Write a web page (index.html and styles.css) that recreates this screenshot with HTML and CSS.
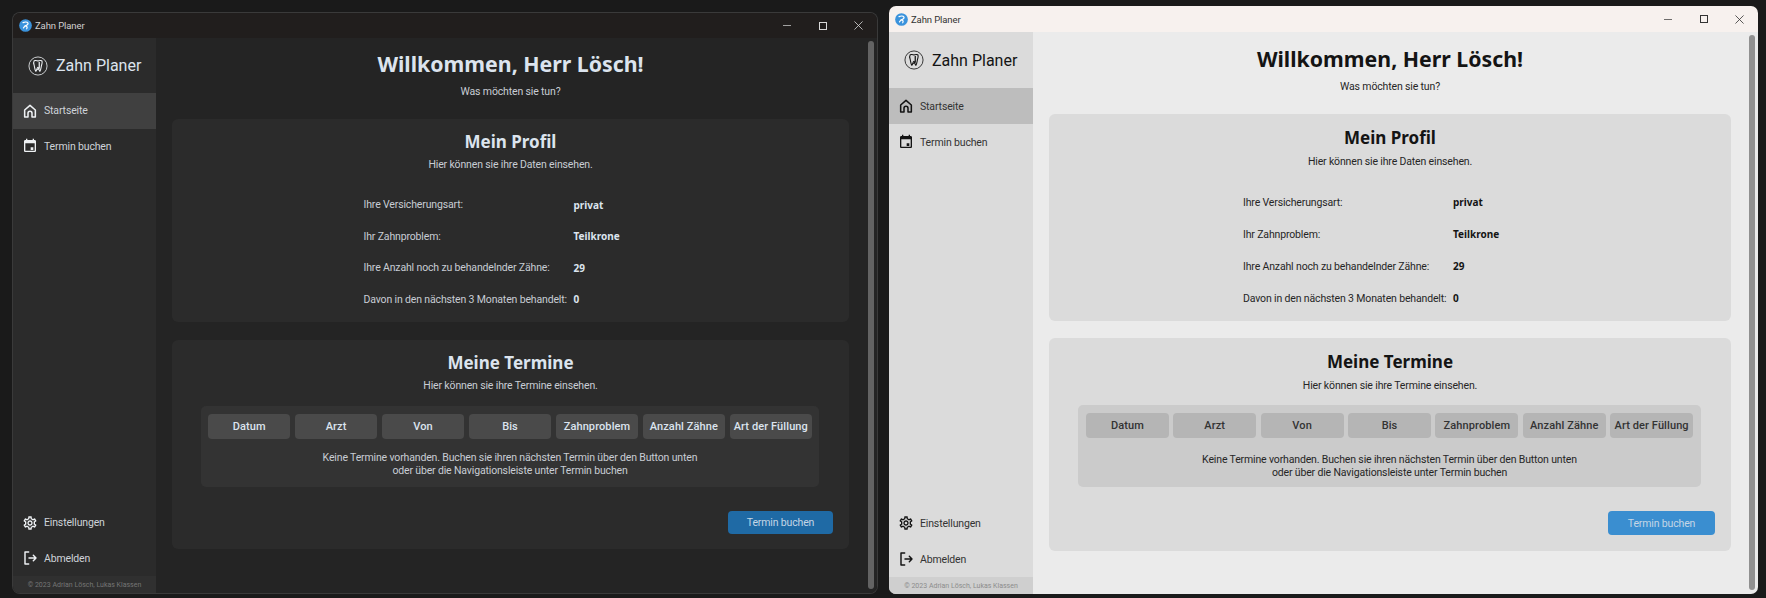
FILE: index.html
```html
<!DOCTYPE html>
<html lang="de">
<head>
<meta charset="utf-8">
<title>Zahn Planer</title>
<link rel="stylesheet" href="styles.css">
</head>
<body>
<svg class="defs" aria-hidden="true">
  <symbol id="i-home" viewBox="0 0 24 24"><path d="M4 10.5 12 3.5l8 7V21h-5v-5.500a3 3 0 0 0-6 0V21H4Z" fill="none" stroke="currentColor" stroke-width="2.300" stroke-linejoin="round"/></symbol>
  <symbol id="i-event" viewBox="0 0 24 24"><path fill="currentColor" d="M17 14h-4v4h4v-4zM16 1v2H8V1H6v2H5c-1.110 0-2 .9-2 2v14c0 1.100.89 2 2 2h14c1.100 0 2-.9 2-2V5c0-1.100-.9-2-2-2h-1V1h-2zm3 18H5V8h14v11z"/></symbol>
  <symbol id="i-gear" viewBox="0 0 24 24"><path fill="currentColor" d="M19.430 12.980c.04-.32.07-.64.07-.98 0-.34-.03-.66-.07-.98l2.110-1.650c.19-.15.24-.42.12-.64l-2-3.460c-.09-.16-.26-.25-.44-.25-.06 0-.12.01-.17.03l-2.490 1c-.52-.4-1.080-.73-1.690-.98l-.38-2.650C14.460 2.180 14.250 2 14 2h-4c-.25 0-.46.18-.49.42l-.38 2.650c-.61.25-1.170.59-1.690.98l-2.490-1c-.06-.02-.12-.03-.18-.03-.17 0-.34.09-.43.25l-2 3.460c-.13.22-.07.49.12.64l2.110 1.650c-.04.32-.07.65-.07.98 0 .33.03.66.07.98l-2.110 1.650c-.19.15-.24.42-.12.64l2 3.460c.09.16.26.25.44.25.06 0 .12-.01.17-.03l2.490-1c.52.4 1.080.73 1.690.98l.38 2.650c.03.24.24.42.49.42h4c.25 0 .46-.18.49-.42l.38-2.650c.61-.25 1.170-.59 1.690-.98l2.490 1c.06.02.12.03.18.03.17 0 .34-.09.43-.25l2-3.460c.12-.22.07-.49-.12-.64l-2.110-1.650zm-1.980-1.710c.04.31.05.52.05.73 0 .21-.02.43-.05.73l-.14 1.130.89.7 1.080.84-.7 1.210-1.270-.51-1.040-.42-.9.68c-.43.32-.84.56-1.250.73l-1.060.43-.16 1.130-.2 1.350h-1.400l-.19-1.350-.16-1.130-1.060-.43c-.43-.18-.83-.41-1.230-.71l-.91-.7-1.060.43-1.270.51-.7-1.210 1.080-.84.89-.7-.14-1.130c-.03-.31-.05-.54-.05-.74s.02-.43.05-.73l.14-1.130-.89-.7-1.080-.84.7-1.210 1.270.51 1.040.42.9-.68c.43-.32.84-.56 1.250-.73l1.060-.43.16-1.130.2-1.350h1.390l.19 1.350.16 1.130 1.060.43c.43.18.83.41 1.230.71l.91.7 1.060-.43 1.270-.51.7 1.210-1.070.85-.89.7.14 1.130zM12 8c-2.210 0-4 1.790-4 4s1.790 4 4 4 4-1.790 4-4-1.790-4-4-4zm0 6c-1.100 0-2-.9-2-2s.9-2 2-2 2 .9 2 2-.9 2-2 2z"/></symbol>
  <symbol id="i-logout" viewBox="0 0 24 24"><path d="M10 3H4.500v18H10M10.500 12H21M17 8l4 4-4 4" fill="none" stroke="currentColor" stroke-width="2.200" stroke-linecap="round" stroke-linejoin="round"/></symbol>
  <symbol id="i-tooth" viewBox="0 0 32 32"><circle cx="16" cy="16" r="14.500" fill="none" stroke="currentColor" stroke-width="1.300"/><path d="M10 7.500c2-1 4 0 6 .5 2-.5 4-1.500 6-.5 1.500 2 .5 5-.5 8-.7 3-1 7-2.500 9-1.500-.5-1.500-6-3-6.500-2 .5-2 6-3.500 6.500-1.500-2-1.800-6-2.500-9-1-3-1.500-6 0-8Z" fill="none" stroke="currentColor" stroke-width="1.700" stroke-linejoin="round"/><path d="M18 9.500v9.500l-3 3" fill="none" stroke="currentColor" stroke-width="2"/></symbol>
  <symbol id="i-app" viewBox="0 0 16 16"><circle cx="8" cy="8" r="7.800" fill="#3b93dc"/><path d="M5 4.500c2-1 5-1 6 .5s-2 3-3 3.500c2 .5 2.500 2 1.500 3.500M7.500 8.500 5.500 11" fill="none" stroke="#fff" stroke-width="1.500" stroke-linecap="round"/></symbol>
  <symbol id="i-close" viewBox="0 0 10 10"><path d="M.5.5l9 9M9.500.5l-9 9" fill="none" stroke="currentColor" stroke-width=".9"/></symbol>
</svg>

<section class="window dark">
  <header class="titlebar">
    <svg class="app-icon"><use href="#i-app"/></svg>
    <span class="app-title">Zahn Planer</span>
    <div class="controls">
      <span class="ctl"><i class="ctl-min"></i></span>
      <span class="ctl"><i class="ctl-max"></i></span>
      <span class="ctl"><svg class="ctl-close"><use href="#i-close"/></svg></span>
    </div>
  </header>
  <div class="app">
    <aside class="sidebar">
      <div class="brand"><svg class="brand-icon"><use href="#i-tooth"/></svg><span>Zahn Planer</span></div>
      <nav class="nav">
        <a class="nav-item active"><svg class="nav-icon"><use href="#i-home"/></svg>Startseite</a>
        <a class="nav-item"><svg class="nav-icon"><use href="#i-event"/></svg>Termin buchen</a>
      </nav>
      <nav class="nav nav-bottom">
        <a class="nav-item"><svg class="nav-icon"><use href="#i-gear"/></svg>Einstellungen</a>
        <a class="nav-item"><svg class="nav-icon"><use href="#i-logout"/></svg>Abmelden</a>
      </nav>
      <footer class="copyright">© 2023 Adrian Lösch, Lukas Klassen</footer>
    </aside>
    <main class="main">
      <h1 class="title">Willkommen, Herr Lösch!</h1>
      <p class="subtitle">Was möchten sie tun?</p>
      <section class="card card-profile">
        <h2 class="card-title">Mein Profil</h2>
        <p class="card-sub">Hier können sie ihre Daten einsehen.</p>
        <dl class="facts">
          <dt>Ihre Versicherungsart:</dt><dd>privat</dd>
          <dt>Ihr Zahnproblem:</dt><dd>Teilkrone</dd>
          <dt>Ihre Anzahl noch zu behandelnder Zähne:</dt><dd>29</dd>
          <dt>Davon in den nächsten 3 Monaten behandelt:</dt><dd>0</dd>
        </dl>
      </section>
      <section class="card card-dates">
        <h2 class="card-title">Meine Termine</h2>
        <p class="card-sub">Hier können sie ihre Termine einsehen.</p>
        <div class="table">
          <div class="table-head">
            <span>Datum</span><span>Arzt</span><span>Von</span><span>Bis</span><span>Zahnproblem</span><span>Anzahl Zähne</span><span>Art der Füllung</span>
          </div>
          <p class="table-empty">Keine Termine vorhanden. Buchen sie ihren nächsten Termin über den Button unten<br>oder über die Navigationsleiste unter Termin buchen</p>
        </div>
        <div class="actions"><button class="btn">Termin buchen</button></div>
      </section>
      <div class="scrollbar"></div>
    </main>
  </div>
</section>

<section class="window light">
  <header class="titlebar">
    <svg class="app-icon"><use href="#i-app"/></svg>
    <span class="app-title">Zahn Planer</span>
    <div class="controls">
      <span class="ctl"><i class="ctl-min"></i></span>
      <span class="ctl"><i class="ctl-max"></i></span>
      <span class="ctl"><svg class="ctl-close"><use href="#i-close"/></svg></span>
    </div>
  </header>
  <div class="app">
    <aside class="sidebar">
      <div class="brand"><svg class="brand-icon"><use href="#i-tooth"/></svg><span>Zahn Planer</span></div>
      <nav class="nav">
        <a class="nav-item active"><svg class="nav-icon"><use href="#i-home"/></svg>Startseite</a>
        <a class="nav-item"><svg class="nav-icon"><use href="#i-event"/></svg>Termin buchen</a>
      </nav>
      <nav class="nav nav-bottom">
        <a class="nav-item"><svg class="nav-icon"><use href="#i-gear"/></svg>Einstellungen</a>
        <a class="nav-item"><svg class="nav-icon"><use href="#i-logout"/></svg>Abmelden</a>
      </nav>
      <footer class="copyright">© 2023 Adrian Lösch, Lukas Klassen</footer>
    </aside>
    <main class="main">
      <h1 class="title">Willkommen, Herr Lösch!</h1>
      <p class="subtitle">Was möchten sie tun?</p>
      <section class="card card-profile">
        <h2 class="card-title">Mein Profil</h2>
        <p class="card-sub">Hier können sie ihre Daten einsehen.</p>
        <dl class="facts">
          <dt>Ihre Versicherungsart:</dt><dd>privat</dd>
          <dt>Ihr Zahnproblem:</dt><dd>Teilkrone</dd>
          <dt>Ihre Anzahl noch zu behandelnder Zähne:</dt><dd>29</dd>
          <dt>Davon in den nächsten 3 Monaten behandelt:</dt><dd>0</dd>
        </dl>
      </section>
      <section class="card card-dates">
        <h2 class="card-title">Meine Termine</h2>
        <p class="card-sub">Hier können sie ihre Termine einsehen.</p>
        <div class="table">
          <div class="table-head">
            <span>Datum</span><span>Arzt</span><span>Von</span><span>Bis</span><span>Zahnproblem</span><span>Anzahl Zähne</span><span>Art der Füllung</span>
          </div>
          <p class="table-empty">Keine Termine vorhanden. Buchen sie ihren nächsten Termin über den Button unten<br>oder über die Navigationsleiste unter Termin buchen</p>
        </div>
        <div class="actions"><button class="btn">Termin buchen</button></div>
      </section>
      <div class="scrollbar"></div>
    </main>
  </div>
</section>
</body>
</html>
```
FILE: styles.css
```css
* { box-sizing: border-box; }
html, body { margin: 0; height: 100%; }
body {
  background: #1a1a1a;
  font-family: Roboto, "Liberation Sans", sans-serif;
  font-size: 11px;
  overflow: hidden;
  position: relative;
}
.defs { position: absolute; width: 0; height: 0; }

/* Windows on a desktop */
.window {
  position: absolute;
  display: flex;
  flex-direction: column;
  border-radius: 7px;
  overflow: hidden;
}
.dark {
  left: 13px; top: 13px; width: 864px; height: 580px;
  --bar: #211e1d; --side: #2b2b2b; --main: #242424; --card: #2b2b2b; --inner: #333333;
  --head: #4a4a4a; --active: #404040; --foot: #303030; --text: #dce4ee; --muted: #c8cdd4;
  --head-text: #dce4ee; --nav: #ced3d9; --copy: #757575; --icon: #eef1f4; --btn: #1f6aa5;
  --scroll: #636363; --ctl: #d8d8d8; --bar-text: #d0d0d0;
  box-shadow: 0 0 0 1px #3a3a3a;
}
.light {
  left: 889px; top: 6px; width: 869px; height: 588px;
  --bar: #f7f1ee; --side: #dbdbdb; --main: #ebebeb; --card: #dbdbdb; --inner: #cbcbcb;
  --head: #b5b5b5; --active: #bdbdbd; --foot: #cfcfcf; --text: #141414; --muted: #262626;
  --head-text: #333333; --nav: #333333; --copy: #8c8c8c; --icon: #141414; --btn: #3a8ed0;
  --scroll: #909090; --ctl: #333333; --bar-text: #333333;
}

/* Title bar */
.titlebar {
  flex: none;
  display: flex;
  align-items: center;
  height: 25px;
  padding: 0 1px 0 6px;
  background: var(--bar);
  color: var(--bar-text);
}
.light .titlebar { height: 26px; }
.app-icon { width: 13px; height: 13px; margin-right: 3px; }
.app-title { font-size: 9.500px; letter-spacing: -.1px; }
.controls { margin-left: auto; display: flex; }
.ctl {
  width: 35.500px;
  height: 24px;
  display: flex;
  align-items: center;
  justify-content: center;
  color: var(--ctl);
}
.ctl-min { width: 8px; border-top: 1px solid var(--ctl); opacity: .7; }
.ctl-max { width: 8px; height: 8px; border: 1px solid var(--ctl); }
.ctl-close { width: 9px; height: 9px; }

/* Layout */
.app { flex: 1; min-height: 0; display: flex; }
.sidebar {
  flex: none;
  width: 143px;
  display: flex;
  flex-direction: column;
  background: var(--side);
}
.light .sidebar { width: 144px; }
.brand {
  flex: none;
  height: 55px;
  display: flex;
  align-items: center;
  gap: 8px;
  padding-left: 15px;
  font-size: 16px;
  font-weight: 400;
  color: var(--text);
}
.light .brand { height: 56px; }
.brand-icon { width: 20px; height: 22px; color: var(--icon); }
.nav { display: flex; flex-direction: column; }
.nav-bottom { margin-top: auto; }
.nav-item {
  height: 35.500px;
  display: flex;
  align-items: center;
  gap: 6px;
  padding-left: 9px;
  font-size: 10.500px;
  letter-spacing: -.15px;
  color: var(--nav);
}
.light .nav-item { height: 36px; }
.nav-item.active { background: var(--active); }
.nav-icon { width: 16px; height: 16px; color: var(--icon); flex: none; }
.copyright {
  flex: none;
  height: 17px;
  display: flex;
  align-items: center;
  justify-content: center;
  font-size: 7px;
  color: var(--copy);
  background: var(--foot);
}

/* Main */
.main {
  flex: 1;
  min-width: 0;
  position: relative;
  padding: 0 28px 0 16px;
  background: var(--main);
  text-align: center;
}
.light .main { padding-right: 27px; }
.title {
  margin: 9px 0 0;
  font-family: "Noto Sans", sans-serif;
  font-size: 21.300px;
  line-height: 34px;
  font-weight: 700;
  color: var(--text);
}
.light .title { margin-top: 10px; }
.subtitle { margin: 4px 0 0; font-size: 10.500px; letter-spacing: -.15px; line-height: 14px; color: var(--muted); }
.card { background: var(--card); border-radius: 6px; padding: 11px 16px 0; }
.light .card { padding-top: 11.500px; }
.subtitle + .card { margin-top: 20px; }
.card-profile { height: 203px; }
.card-dates { height: 209px; margin-top: 18px; }
.light .card-profile { height: 207px; }
.light .card-dates { height: 213px; margin-top: 17px; }
.card-title {
  margin: 0;
  font-family: "Noto Sans", sans-serif;
  font-size: 17px;
  line-height: 24px;
  font-weight: 700;
  color: var(--text);
}
.card-sub { margin: 4px 0 0; font-size: 10.500px; letter-spacing: -.15px; line-height: 14px; color: var(--muted); }
.light .card-sub { margin-top: 5.500px; }
.facts {
  display: grid;
  grid-template-columns: 210px 84px;
  justify-content: center;
  grid-auto-rows: 31.500px;
  align-items: center;
  margin: 17px 0 0;
  text-align: left;
  font-size: 10.500px;
  letter-spacing: -.15px;
  color: var(--muted);
}
.light .facts { grid-auto-rows: 32px; }
.facts dd {
  margin: 0;
  font-family: "Noto Sans", sans-serif;
  font-weight: 700;
  font-size: 10px;
  letter-spacing: 0;
  color: var(--text);
}
.table {
  margin: 13px 14px 0 13px;
  height: 81px;
  padding: 8px 7px 0;
  background: var(--inner);
  border-radius: 5px;
}
.light .table { margin-top: 12px; height: 82px; padding: 8px 8px 0; }
.table-head { display: grid; grid-template-columns: repeat(7, 1fr); gap: 4.600px; }
.table-head span {
  height: 24.500px;
  display: flex;
  align-items: center;
  justify-content: center;
  background: var(--head);
  border-radius: 4px;
  font-size: 11px;
  font-weight: 500;
  letter-spacing: .1px;
  color: var(--head-text);
  white-space: nowrap;
}
.table-empty { margin: 12px 0 0; font-size: 10.500px; letter-spacing: -.15px; line-height: 13px; color: var(--muted); }
.light .table-empty { margin-top: 15px; line-height: 13.500px; }
.actions { display: flex; justify-content: flex-end; margin-top: 24px; }
.btn {
  width: 105px;
  height: 23px;
  padding: 0;
  border: 0;
  border-radius: 4px;
  background: var(--btn);
  font-family: inherit;
  font-size: 10.500px;
  letter-spacing: -.15px;
  color: #c4d6e6;
}
.light .btn { width: 107px; height: 24px; }
.scrollbar {
  position: absolute;
  top: 3px;
  bottom: 4px;
  right: 3px;
  width: 6px;
  border-radius: 3px;
  background: var(--scroll);
}
```
